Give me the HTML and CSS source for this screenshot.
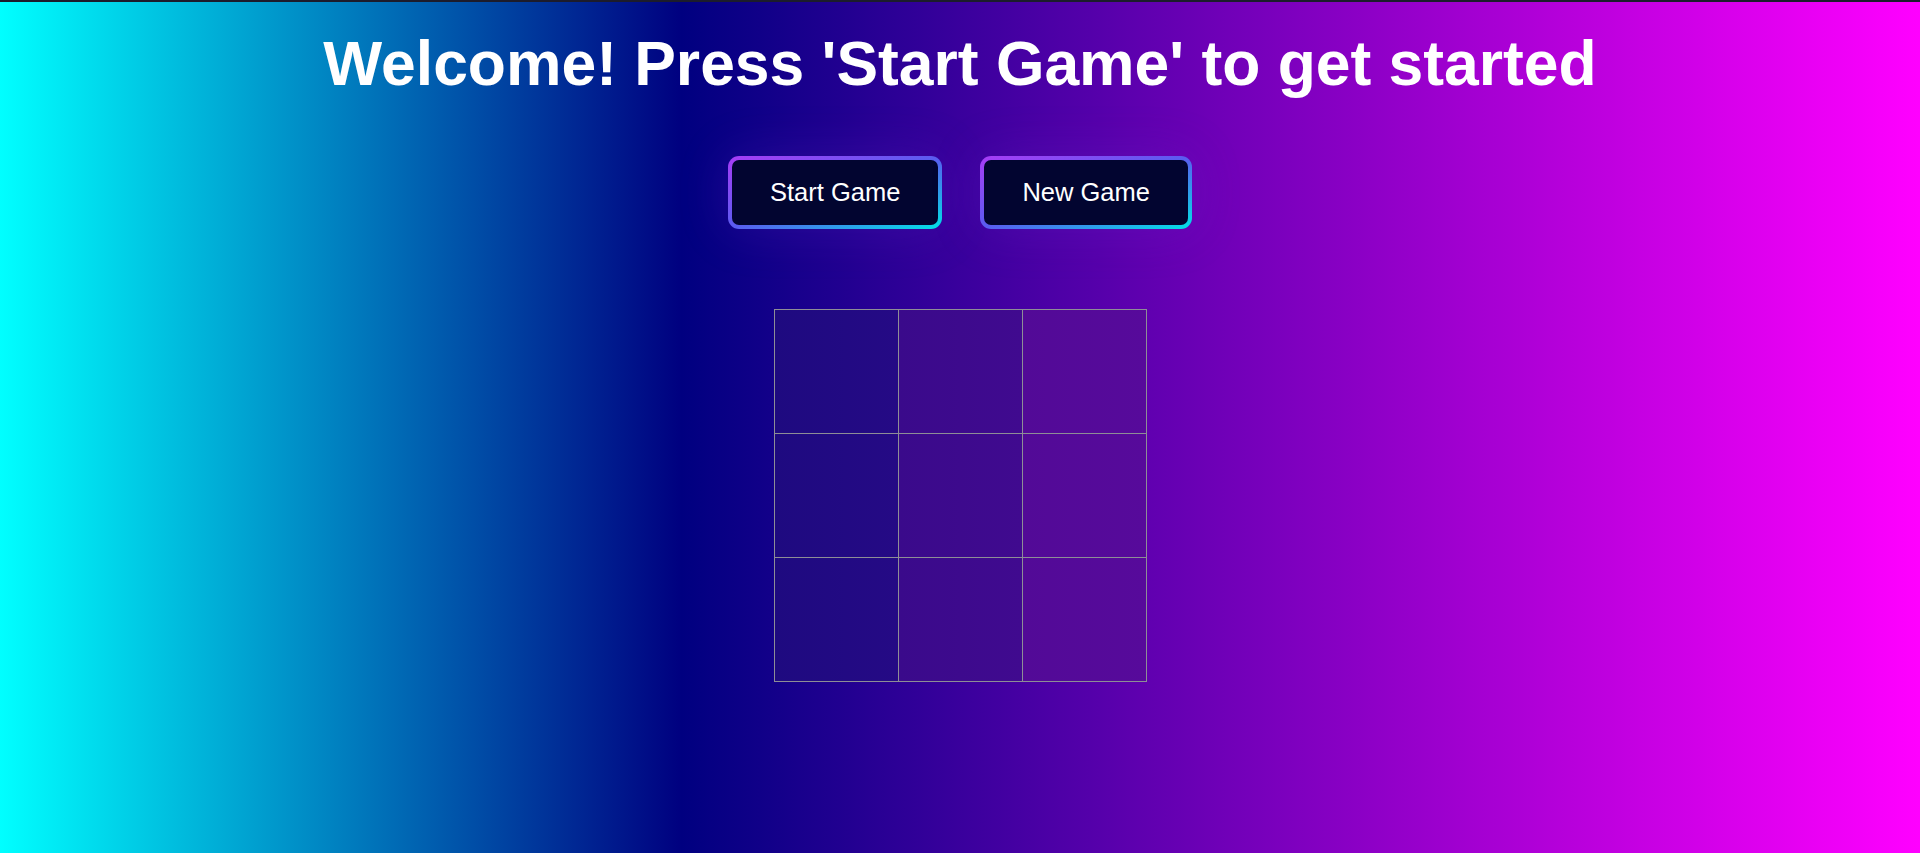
FILE: index.html
```html
<!DOCTYPE html>
<html lang="en">
<head>
<meta charset="utf-8">
<title>Tic Tac Toe</title>
<link rel="stylesheet" href="styles.css">
</head>
<body>
<div class="topline"></div>
<main class="page">
  <h1 class="title">Welcome! Press 'Start Game' to get started</h1>
  <div class="controls">
    <button class="btn">Start Game</button>
    <button class="btn">New Game</button>
  </div>
  <div class="board">
    <div class="cell c1"></div><div class="cell c2"></div><div class="cell c3"></div>
    <div class="cell c1"></div><div class="cell c2"></div><div class="cell c3"></div>
    <div class="cell c1"></div><div class="cell c2"></div><div class="cell c3"></div>
  </div>
</main>
</body>
</html>
```
FILE: styles.css
```css
html, body {
  margin: 0;
  padding: 0;
  height: 100%;
}
body {
  font-family: "Liberation Sans", Arial, sans-serif;
  background: linear-gradient(to right, #00ffff 0%, #000080 35.5%, #ff00ff 100%);
  color: #fff;
  overflow: hidden;
}
.topline {
  height: 2px;
  background: #1c1c2c;
}
.page {
  display: flex;
  flex-direction: column;
  align-items: center;
}
.title {
  margin: 26px 0 0;
  font-size: 62.4px;
  font-weight: bold;
  line-height: 71px;
  color: #ffffff;
}
.controls {
  display: flex;
  gap: 38px;
  margin-top: 57px;
}
.btn {
  font-family: "Liberation Sans", Arial, sans-serif;
  font-size: 25.5px;
  color: #ffffff;
  padding: 17px 38px 18px;
  line-height: 30px;
  border: 4px solid transparent;
  border-radius: 11px;
  background:
    linear-gradient(#020530, #020530) padding-box,
    linear-gradient(to bottom right, #a83cf6 0%, #5a5cf0 50%, #00e2e6 100%) border-box;
  box-shadow: 0 0 50px rgba(110, 40, 200, 0.22);
  cursor: pointer;
}
.board {
  margin-top: 80px;
  display: grid;
  grid-template-columns: repeat(3, 123px);
  grid-template-rows: repeat(3, 123px);
  gap: 1px;
  padding: 1px;
  background: #8e8e96;
}
.cell {
  background: #200a80;
}
.c1 { background: linear-gradient(to right, #1e0a80, #250a85); }
.c2 { background: linear-gradient(to right, #3a0a8b, #400a8f); }
.c3 { background: linear-gradient(to right, #520a97, #570a9b); }
```
